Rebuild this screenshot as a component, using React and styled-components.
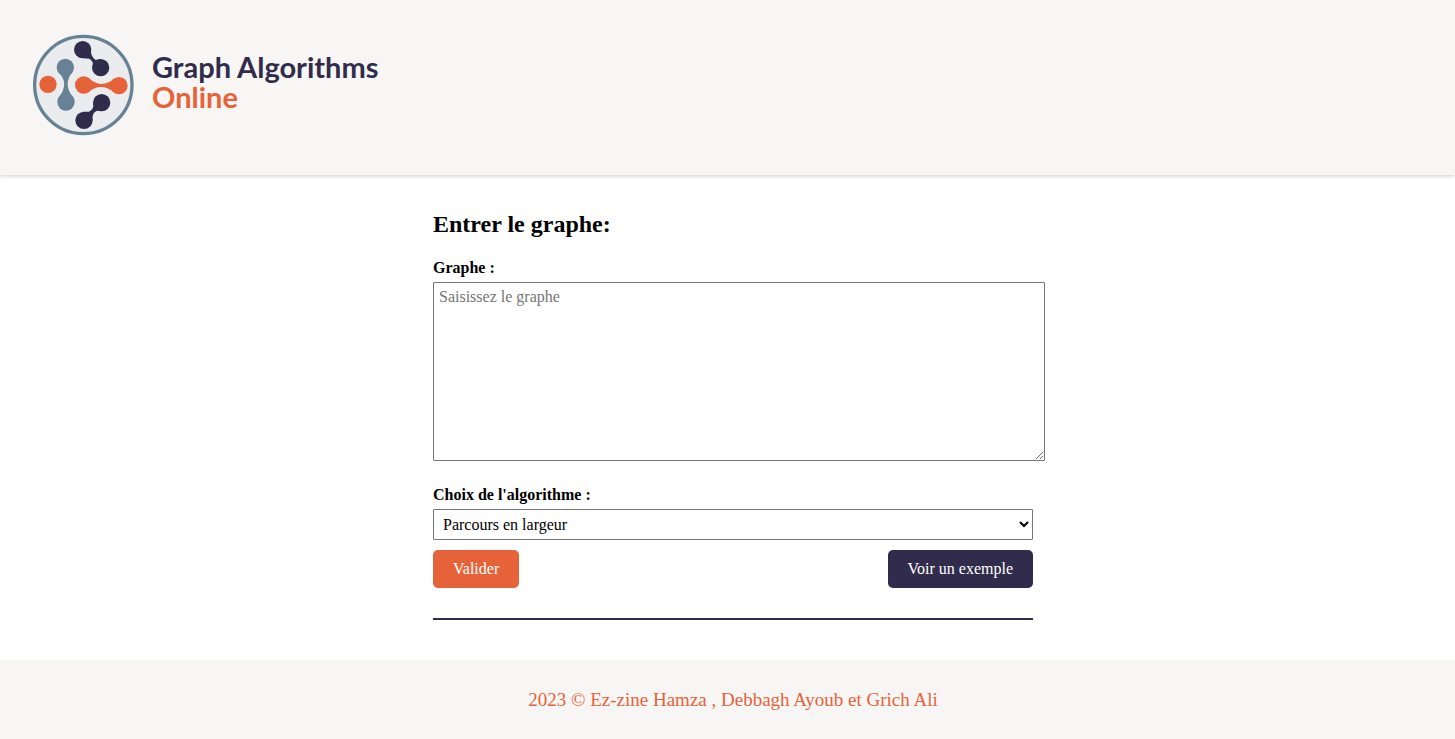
import React from 'react';
import styled, { createGlobalStyle } from 'styled-components';

const navy = '#312c4c';
const orange = '#e6633a';
const paper = '#f7f6f4';

const GlobalStyle = createGlobalStyle`
  *, *::before, *::after { box-sizing: border-box; }
  body {
    margin: 0;
    background: #fff;
    color: #000;
    font-family: "Liberation Serif", "Times New Roman", serif;
    font-size: 16px;
  }
`;

const Page = styled.div`
  display: flex;
  flex-direction: column;
  min-height: 100vh;
`;

const Header = styled.header`
  padding: 34px 32px 39px;
  background: ${paper};
  box-shadow: 0 1px 4px rgba(0, 0, 0, 0.2);
`;

const Brand = styled.a`
  display: inline-flex;
  align-items: center;
  gap: 18px;
  vertical-align: top;
  text-decoration: none;
`;

const Emblem = styled.svg`
  display: block;
  width: 102px;
  height: 102px;
`;

const BrandName = styled.span`
  display: flex;
  flex-direction: column;
  padding-bottom: 6px;
  color: ${navy};
  font: 700 29px/30px Lato, sans-serif;
`;

const BrandAccent = styled.span`
  color: ${orange};
`;

const Main = styled.main`
  flex: 1;
  padding: 34px 0 39px 11px;
`;

const Form = styled.form`
  display: flex;
  flex-direction: column;
  width: 100%;
  max-width: 600px;
  margin: 0 auto;
  padding-bottom: 30px;
  border-bottom: 2px solid ${navy};
`;

const Title = styled.h2`
  margin: 0 0 20px;
  font-size: 24px;
  line-height: 30px;
`;

const Label = styled.label`
  margin-bottom: 5px;
  font-weight: 700;
  line-height: 18px;
`;

const GraphInput = styled.textarea`
  width: calc(100% + 12px);
  height: 179px;
  margin-bottom: 25px;
  padding: 5px;
  border: 1px solid #767676;
  border-radius: 1px;
  font: inherit;
`;

const AlgorithmSelect = styled.select`
  width: 100%;
  height: 31px;
  margin-bottom: 10px;
  padding: 5px;
  border: 1px solid #767676;
  border-radius: 1px;
  background-color: #fff;
  color: #000;
  font: inherit;
`;

const Actions = styled.div`
  display: flex;
  justify-content: space-between;
`;

const Button = styled.button`
  height: 38px;
  padding: 0 20px;
  border: 0;
  border-radius: 5px;
  background: ${({ $tone }) => ($tone === 'dark' ? navy : orange)};
  color: #fff;
  font: inherit;
  cursor: pointer;
`;

const Footer = styled.footer`
  padding: 28px 0 27px 11px;
  background: ${paper};
  color: ${orange};
  font-size: 19px;
  line-height: 24px;
  text-align: center;
`;

function Logo() {
  return (
    <Emblem viewBox="36 27 306 306" aria-hidden="true">
      <circle cx="190" cy="180" r="146" fill="#eaecee" stroke="#678294" strokeWidth="10" />
      <circle cx="84" cy="178" r="26" fill={orange} />
      <g fill="#678294">
        <circle cx="136" cy="127" r="26" />
        <circle cx="138" cy="231" r="26" />
        <path d="M113 139 Q151 175 115 219 H161 Q126 179 159 139 Z" />
      </g>
      <g fill={orange}>
        <circle cx="191" cy="180" r="26" />
        <circle cx="297" cy="182" r="26" />
        <path d="M203 157 Q243 195 284 160 V204 Q243 169 203 203 Z" />
      </g>
      <g fill={navy}>
        <circle cx="188" cy="74" r="26" />
        <circle cx="242" cy="128" r="26" />
        <path d="M213 67 Q209 92 227 105 L243 102 L217 126 Q223 110 208 101 L189 100 Z" />
        <circle cx="245" cy="233" r="26" />
        <circle cx="192" cy="286" r="26" />
        <path d="M219 233 Q224 251 207 260 L192 260 L218 286 Q214 264 231 257 L245 259 Z" />
      </g>
    </Emblem>
  );
}

export default function App() {
  return (
    <>
      <GlobalStyle />
      <Page>
        <Header>
          <Brand href="#">
            <Logo />
            <BrandName>
              <span>Graph Algorithms</span>
              <BrandAccent>Online</BrandAccent>
            </BrandName>
          </Brand>
        </Header>
        <Main>
          <Form onSubmit={(event) => event.preventDefault()}>
            <Title>Entrer le graphe:</Title>
            <Label htmlFor="graph">Graphe :</Label>
            <GraphInput id="graph" name="graph" placeholder="Saisissez le graphe" />
            <Label htmlFor="algorithm">Choix de l'algorithme :</Label>
            <AlgorithmSelect id="algorithm" name="algorithm">
              <option>Parcours en largeur</option>
            </AlgorithmSelect>
            <Actions>
              <Button type="submit">Valider</Button>
              <Button type="button" $tone="dark">Voir un exemple</Button>
            </Actions>
          </Form>
        </Main>
        <Footer>2023 © Ez-zine Hamza , Debbagh Ayoub et Grich Ali</Footer>
      </Page>
    </>
  );
}
